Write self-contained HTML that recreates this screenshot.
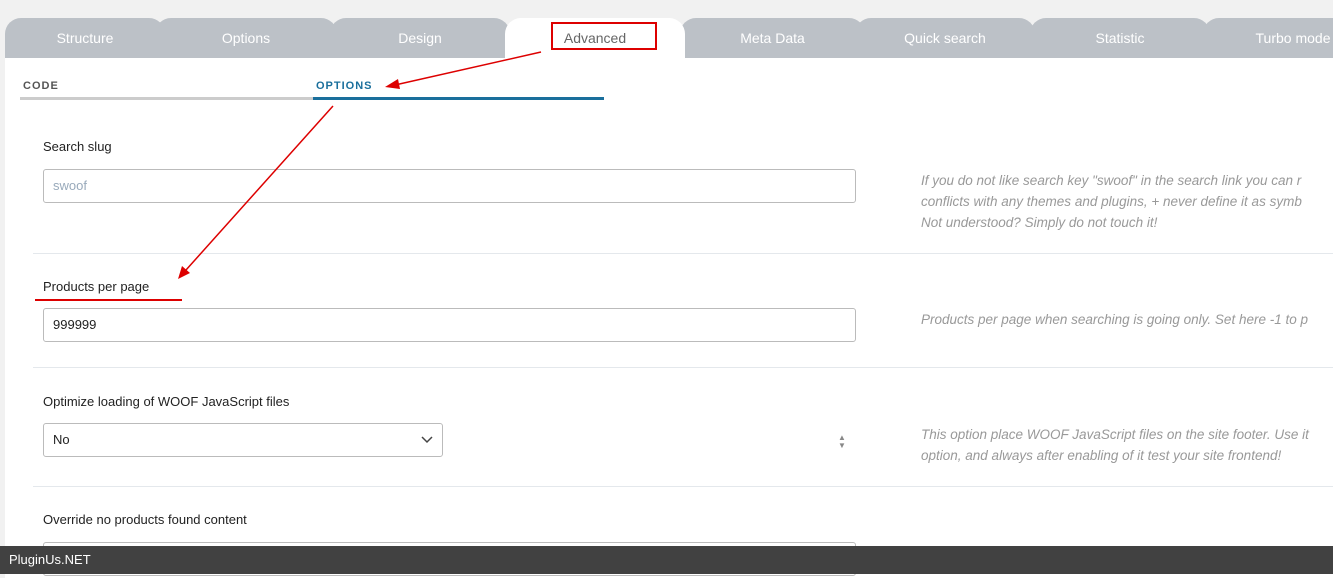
<!DOCTYPE html>
<html><head><style>
*{margin:0;padding:0;box-sizing:border-box}
body{width:1333px;height:574px;overflow:hidden;background:#f1f1f1;font-family:"Liberation Sans",sans-serif;position:relative}
.panel{position:absolute;left:5px;top:58px;width:1328px;height:520px;background:#fff}
.tab{position:absolute;top:18px;height:40px;background:#bcc1c7;border-radius:16px 16px 0 0;color:#fff;font-size:14px;text-align:center;line-height:40px}
.tab.act{background:#fff;color:#666}
.lbl{position:absolute;left:43px;font-size:13px;color:#222}
.inp{position:absolute;left:43px;width:813px;height:34px;border:1px solid #bbb;border-radius:3px;font-size:13px;line-height:32px;padding-left:9px;color:#222;background:#fff}
.sep{position:absolute;left:33px;width:1300px;height:1px;background:#e4e8ec}
.help{position:absolute;left:921px;font-size:13.5px;font-style:italic;color:#999;line-height:21px;white-space:nowrap}
</style></head><body>
<div class="tab" style="left:5px;width:160px">Structure</div>
<div class="tab" style="left:155px;width:182px">Options</div>
<div class="tab" style="left:330px;width:180px">Design</div>
<div class="tab" style="left:680px;width:185px">Meta Data</div>
<div class="tab" style="left:855px;width:180px">Quick search</div>
<div class="tab" style="left:1030px;width:180px">Statistic</div>
<div class="tab" style="left:1203px;width:180px">Turbo mode</div>
<div class="panel"></div>
<div class="tab act" style="left:505px;width:180px">Advanced</div>
<div style="position:absolute;left:551px;top:22px;width:106px;height:28px;border:2px solid #d00"></div>
<div style="position:absolute;left:23px;top:80px;font-size:11px;letter-spacing:1px;color:#555;font-weight:bold">CODE</div>
<div style="position:absolute;left:316px;top:80px;font-size:11px;letter-spacing:1px;color:#1a6f9c;font-weight:bold">OPTIONS</div>
<div style="position:absolute;left:20px;top:97px;width:293px;height:3px;background:#ccc"></div>
<div style="position:absolute;left:313px;top:97px;width:291px;height:3px;background:#1a6f9c"></div>
<div class="lbl" style="top:139px">Search slug</div>
<div class="inp" style="top:169px;color:#9ab">swoof</div>
<div class="help" style="top:170px">If you do not like search key "swoof" in the search link you can r<br>conflicts with any themes and plugins, + never define it as symb<br>Not understood? Simply do not touch it!</div>
<div class="sep" style="top:253px"></div>
<div class="lbl" style="top:279px">Products per page</div>
<div style="position:absolute;left:35px;top:299px;width:147px;height:2px;background:#d00"></div>
<div class="inp" style="top:308px">999999</div>
<div class="help" style="top:309px">Products per page when searching is going only. Set here -1 to p</div>
<div class="sep" style="top:367px"></div>
<div class="lbl" style="top:394px">Optimize loading of WOOF JavaScript files</div>
<div class="inp" style="top:423px;width:400px">No<svg style="position:absolute;right:9px;top:12px" width="12" height="8"><path d="M1 1l5 5 5-5" stroke="#444" stroke-width="1.5" fill="none"/></svg></div>
<div style="position:absolute;left:838px;top:434px;font-size:8px;color:#888;line-height:8px">▲<br>▼</div>
<div class="help" style="top:424px">This option place WOOF JavaScript files on the site footer. Use it<br>option, and always after enabling of it test your site frontend!</div>
<div class="sep" style="top:486px"></div>
<div class="lbl" style="top:512px">Override no products found content</div>
<div class="inp" style="top:542px"></div>
<svg style="position:absolute;left:0;top:0" width="1333" height="574">
<line x1="541" y1="52" x2="395" y2="85" stroke="#d00" stroke-width="1.5"/>
<polygon points="385,87 398,79 400,89" fill="#d00"/>
<line x1="333" y1="106" x2="186" y2="270" stroke="#d00" stroke-width="1.5"/>
<polygon points="178,279 182,266 190,273" fill="#d00"/>
</svg>
<div style="position:absolute;left:0;top:546px;width:1333px;height:28px;background:#414141;color:#fff;font-size:13px;line-height:28px;padding-left:9px">PluginUs.NET</div>
</body></html>
